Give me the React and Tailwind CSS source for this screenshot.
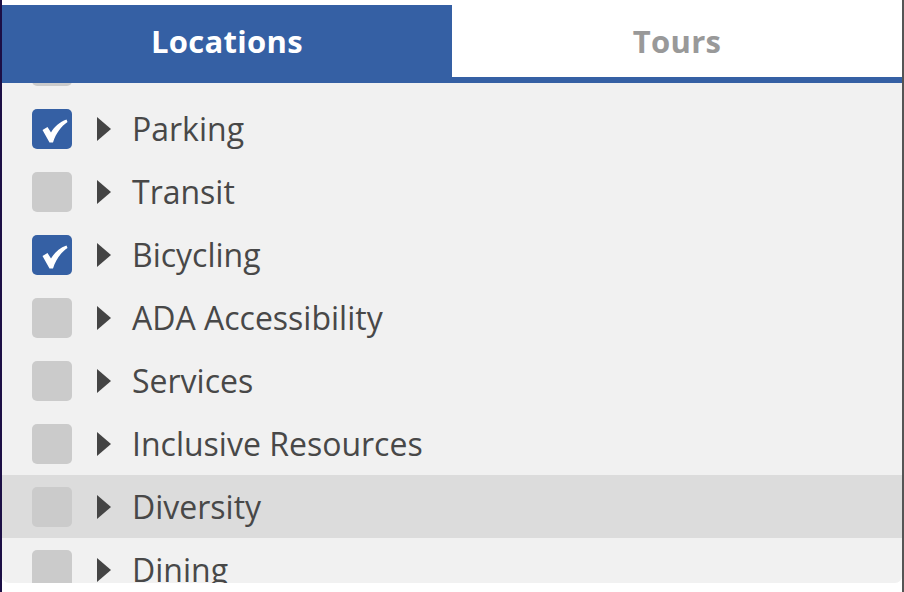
import React from "react";

const rows = [
  { label: "Points of Interest", checked: false },
  { label: "Parking", checked: true },
  { label: "Transit", checked: false },
  { label: "Bicycling", checked: true },
  { label: "ADA Accessibility", checked: false },
  { label: "Services", checked: false },
  { label: "Inclusive Resources", checked: false },
  { label: "Diversity", checked: false, hover: true },
  { label: "Dining", checked: false },
];

function Check() {
  return (
    <svg
      className="translate-x-[3px] translate-y-[2px]"
      width="26"
      height="24"
      viewBox="0 0 26 24"
    >
      <path
        d="M0.5 11 L5.5 8 L9 13.5 C12.5 7.5 17.5 3 24.5 0.5 L25.5 3 C19.5 7 14 14 11 23.5 L7.5 23.5 Z"
        fill="#ffffff"
      />
    </svg>
  );
}

export default function App() {
  return (
    <div
      className="w-[904px] h-[592px] bg-white border-l-2 border-r-2 border-l-[#1c0f45] border-r-[#555555] flex flex-col overflow-hidden"
      style={{ fontFamily: '"Open Sans", "Noto Sans", sans-serif' }}
    >
      <div className="h-[5px] shrink-0" />
      <div className="flex h-[78px] shrink-0">
        <div className="flex-1 bg-[#3560a4] border-b-[6px] border-[#3560a4] flex items-center justify-center text-white font-bold text-[31px] tracking-[0.3px] leading-none">
          Locations
        </div>
        <div className="flex-1 bg-white border-b-[6px] border-[#3560a4] flex items-center justify-center text-[#999999] font-bold text-[31px] tracking-[0.3px] leading-none">
          Tours
        </div>
      </div>
      <div className="h-[500px] shrink-0 bg-[#f1f1f1] rounded-b-[7px] overflow-hidden">
        <div className="mt-[-49px]">
          {rows.map((r) => (
            <div
              key={r.label}
              className={`h-[63px] flex items-center pl-[30px] ${r.hover ? "bg-[#dcdcdc]" : ""}`}
            >
              <div
                className={`w-[40px] h-[40px] rounded-[5px] flex items-center justify-center shrink-0 ${
                  r.checked ? "bg-[#3560a4]" : "bg-[#cbcbcb]"
                }`}
              >
                {r.checked && <Check />}
              </div>
              <svg className="ml-[25px] shrink-0" width="14" height="24" viewBox="0 0 14 24">
                <path d="M0 0 L14 12 L0 24 Z" fill="#444444" />
              </svg>
              <span className="ml-[21px] text-[32px] leading-none text-[#484848] whitespace-nowrap">
                {r.label}
              </span>
            </div>
          ))}
        </div>
      </div>
    </div>
  );
}
